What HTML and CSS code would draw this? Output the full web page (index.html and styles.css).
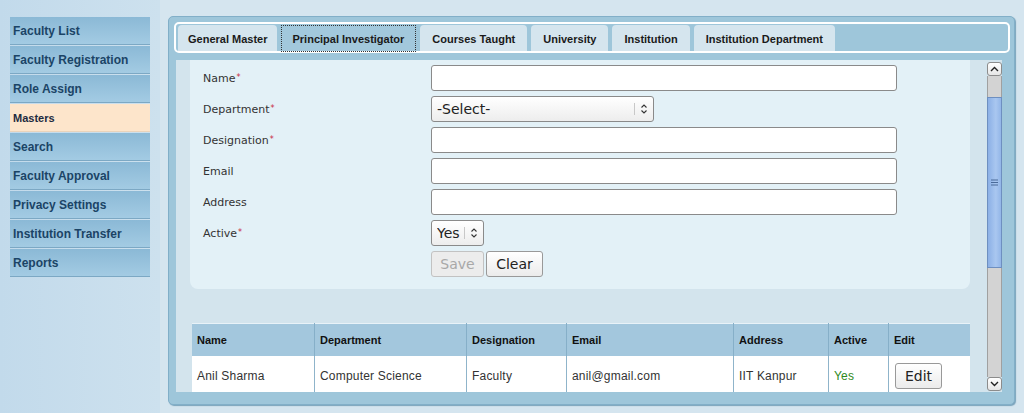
FILE: index.html
```html
<!DOCTYPE html>
<html lang="en">
<head>
    <meta charset="UTF-8">
    <meta name="viewport" content="width=device-width, initial-scale=1.0">
    <title>Masters - Principal Investigator</title>
    <link rel="stylesheet" href="styles.css">
</head>
<body>
    <div class="page">
        <ul class="side-nav">
            <li><a href="#" class="nav-item">Faculty List</a></li>
            <li><a href="#" class="nav-item">Faculty Registration</a></li>
            <li><a href="#" class="nav-item">Role Assign</a></li>
            <li><a href="#" class="nav-item nav-active">Masters</a></li>
            <li><a href="#" class="nav-item">Search</a></li>
            <li><a href="#" class="nav-item">Faculty Approval</a></li>
            <li><a href="#" class="nav-item">Privacy Settings</a></li>
            <li><a href="#" class="nav-item">Institution Transfer</a></li>
            <li><a href="#" class="nav-item">Reports</a></li>
        </ul>

        <div class="main">
            <div class="panel">
                <ul class="tabs">
                    <li class="tab">General Master</li>
                    <li class="tab tab-active"><span class="tab-focus">Principal Investigator</span></li>
                    <li class="tab">Courses Taught</li>
                    <li class="tab">University</li>
                    <li class="tab">Institution</li>
                    <li class="tab">Institution Department</li>
                </ul>

                <div class="tab-body">
                    <div class="scroll-area">
                        <form class="entry-form">
                            <div class="form-row">
                                <label class="form-label">Name<span class="req">*</span></label>
                                <input type="text" class="text-input">
                            </div>
                            <div class="form-row">
                                <label class="form-label">Department<span class="req">*</span></label>
                                <span class="select-wrap select-wide">
                                    <select class="select-box"><option>-Select-</option></select>
                                    <svg class="select-arrows" width="8" height="12" viewBox="0 0 8 12">
                                        <path d="M1.5 4.5 L4 2 L6.5 4.5 M1.5 7.5 L4 10 L6.5 7.5" fill="none" stroke="#333" stroke-width="1.1"/>
                                    </svg>
                                </span>
                            </div>
                            <div class="form-row">
                                <label class="form-label">Designation<span class="req">*</span></label>
                                <input type="text" class="text-input">
                            </div>
                            <div class="form-row">
                                <label class="form-label">Email</label>
                                <input type="text" class="text-input">
                            </div>
                            <div class="form-row">
                                <label class="form-label">Address</label>
                                <input type="text" class="text-input">
                            </div>
                            <div class="form-row">
                                <label class="form-label">Active<span class="req">*</span></label>
                                <span class="select-wrap select-small">
                                    <select class="select-box"><option>Yes</option><option>No</option></select>
                                    <svg class="select-arrows" width="8" height="12" viewBox="0 0 8 12">
                                        <path d="M1.5 4.5 L4 2 L6.5 4.5 M1.5 7.5 L4 10 L6.5 7.5" fill="none" stroke="#333" stroke-width="1.1"/>
                                    </svg>
                                </span>
                            </div>
                            <div class="form-row">
                                <span class="form-label"></span>
                                <div class="button-row">
                                    <button type="button" class="btn btn-save" disabled>Save</button>
                                    <button type="button" class="btn btn-clear">Clear</button>
                                </div>
                            </div>
                        </form>

                        <table class="data-table">
                            <thead>
                                <tr>
                                    <th class="col-name">Name</th>
                                    <th class="col-dept">Department</th>
                                    <th class="col-desig">Designation</th>
                                    <th class="col-email">Email</th>
                                    <th class="col-addr">Address</th>
                                    <th class="col-active">Active</th>
                                    <th class="col-edit">Edit</th>
                                </tr>
                            </thead>
                            <tbody>
                                <tr>
                                    <td>Anil Sharma</td>
                                    <td>Computer Science</td>
                                    <td>Faculty</td>
                                    <td>anil@gmail.com</td>
                                    <td>IIT Kanpur</td>
                                    <td class="status-yes">Yes</td>
                                    <td><button type="button" class="btn btn-edit">Edit</button></td>
                                </tr>
                            </tbody>
                        </table>
                    </div>

                    <!-- fake scrollbar, drawn like the old gtk theme -->
                    <div class="scrollbar">
                        <div class="scroll-btn">
                            <svg width="9" height="6" viewBox="0 0 9 6"><path d="M1 5 L4.5 1.5 L8 5" fill="none" stroke="#222" stroke-width="1.4"/></svg>
                        </div>
                        <div class="scroll-track track-top"></div>
                        <div class="scroll-thumb">
                            <svg width="7" height="7" viewBox="0 0 7 7"><path d="M0 1 H7 M0 3.5 H7 M0 6 H7" stroke="#4a6a99" stroke-width="1"/></svg>
                        </div>
                        <div class="scroll-track track-bottom"></div>
                        <div class="scroll-btn">
                            <svg width="9" height="6" viewBox="0 0 9 6"><path d="M1 1 L4.5 4.5 L8 1" fill="none" stroke="#222" stroke-width="1.4"/></svg>
                        </div>
                    </div>
                </div>
            </div>
        </div>
    </div>
</body>
</html>
```

FILE: styles.css
```css
html, body {
    margin: 0;
    padding: 0;
    height: 413px;
    overflow: hidden;
}
body {
    background-color: #d5e5ef;
    font-family: "Liberation Sans", Arial, sans-serif;
}
.page {
    display: flex;
    height: 413px;
}

/* left menu */
.side-nav {
    list-style: none;
    margin: 0;
    width: 140px;
    padding: 17px 10px 0 10px;
    background: linear-gradient(to right, #c2daeb, #cde1ee);
}
.side-nav li {
    margin-bottom: 1px;
}
.nav-item {
    display: block;
    height: 28px;
    line-height: 28px;
    padding-left: 3px;
    box-sizing: border-box;
    background: linear-gradient(#8bb9d6, #a3cbe3);
    border-bottom: 1px solid #7ca8c4;
    color: #1b4466;
    font-size: 12px;
    font-weight: bold;
    text-decoration: none;
}
.nav-active {
    background: #fde5cb;
    border-bottom: 1px solid #e9d3bb;
    color: #1d2b40;
    font-size: 11px;
}

/* main area */
.main {
    flex: 1;
    padding: 16px 9px 0 8px;
}
.panel {
    border: 1px solid #82afc8;
    border-radius: 5px;
    background-color: #9ec6da;
    padding: 5px 4px 12px 5px;
    box-shadow: 1px 1px 1px #7aa3bb;
}
.tabs {
    list-style: none;
    margin: 0;
    display: flex;
    gap: 4px;
    padding: 1px 2px 0 2px;
    border: 2px solid #ffffff;
    border-radius: 5px;
    height: 26px;
}
.tab {
    height: 26px;
    line-height: 28px;
    padding: 0 12px;
    background-color: #d5e5ee;
    border-radius: 4px 4px 0 0;
    color: #1a1a1a;
    font-size: 11px;
    font-weight: bold;
    white-space: nowrap;
}
.tab:first-child {
    padding: 0 10px;
}
.tab-active {
    background-color: #a2c8dc;
    padding: 0;
}
.tab-focus {
    display: block;
    height: 25px;
    line-height: 26px;
    padding: 0 11px 0 10px;
    border: 1px dotted #333;
}

/* tab content */
.tab-body {
    display: flex;
    height: 332px;
    margin: 7px 8px 0 2px;
    background-color: #d3e4ed;
}
.scroll-area {
    flex: 1;
    overflow: hidden;
    padding: 0 17px 0 14px;
}
.entry-form {
    display: flex;
    flex-direction: column;
    gap: 5px;
    padding: 5px 0 12px 13px;
    background-color: #e3f1f7;
    border-radius: 0 0 8px 8px;
}
.form-row {
    display: flex;
    align-items: center;
    height: 26px;
}
.form-label {
    width: 228px;
    flex-shrink: 0;
    color: #333333;
    font-family: "DejaVu Sans", sans-serif;
    font-size: 11px;
}
.req {
    color: #c8283c;
    font-size: 8px;
    vertical-align: 2px;
    margin-left: 1px;
}
.text-input {
    width: 466px;
    height: 26px;
    box-sizing: border-box;
    border: 1px solid #8a8a8a;
    border-radius: 3px;
    background-color: #ffffff;
    font-family: "DejaVu Sans", sans-serif;
    font-size: 14px;
}
.select-wrap {
    position: relative;
    display: block;
    height: 26px;
}
.select-wide {
    width: 223px;
}
.select-small {
    width: 53px;
}
.select-box {
    appearance: none;
    -webkit-appearance: none;
    width: 100%;
    height: 26px;
    box-sizing: border-box;
    padding: 0 0 0 5px;
    border: 1px solid #8a8a8a;
    border-radius: 3px;
    background: linear-gradient(#ffffff, #ededed);
    color: #222222;
    font-family: "DejaVu Sans", sans-serif;
    font-size: 14px;
}
.select-arrows {
    position: absolute;
    top: 7px;
    right: 6px;
    padding-left: 5px;
    border-left: 1px solid #c8c8c8;
    height: 12px;
}
.button-row {
    display: flex;
    gap: 2px;
}
.btn {
    height: 26px;
    box-sizing: border-box;
    border: 1px solid #999999;
    border-radius: 3px;
    background: linear-gradient(#ffffff, #ebebeb);
    color: #222222;
    font-family: "DejaVu Sans", sans-serif;
    font-size: 14px;
    padding: 0;
}
.btn-save {
    width: 53px;
    color: #a8a8a8;
    border-color: #c2c2c2;
    background: #ececec;
}
.btn-clear {
    width: 57px;
}
.btn-edit {
    width: 47px;
}

/* listing table */
.data-table {
    width: 778px;
    margin: 34px 0 0 2px;
    border-collapse: collapse;
    table-layout: fixed;
    border-top: 1px solid #e8f2f8;
}
.data-table th {
    height: 32px;
    padding: 0 5px;
    background-color: #a3c7dd;
    border-left: 1px solid #86afc8;
    color: #111111;
    font-size: 11px;
    font-weight: bold;
    text-align: left;
}
.data-table td {
    height: 40px;
    padding: 0 5px;
    background-color: #ffffff;
    border-left: 1px solid #8fb4ca;
    color: #333333;
    font-size: 12px;
    letter-spacing: 0.2px;
    vertical-align: top;
    line-height: 40px;
}
.data-table td:last-child {
    padding: 7px 0 0 6px;
    line-height: normal;
}
.data-table th:first-child,
.data-table td:first-child {
    border-left: none;
}
.col-name { width: 112px; }
.col-dept { width: 141px; }
.col-desig { width: 89px; }
.col-email { width: 156px; }
.col-addr { width: 84px; }
.col-active { width: 49px; }
.col-edit { width: 71px; }
.status-yes {
    color: #2f8a1c !important;
}

/* scrollbar */
.scrollbar {
    width: 15px;
    margin: 2px 0 1px 0;
    display: flex;
    flex-direction: column;
}
.scroll-btn {
    height: 14px;
    box-sizing: border-box;
    border: 1px solid #8c8c8c;
    border-radius: 3px;
    background: linear-gradient(#ffffff, #e6e6e6);
    display: flex;
    align-items: center;
    justify-content: center;
}
.scroll-track {
    background-color: #d3d3d3;
    border-left: 1px solid #a0a0a0;
    border-right: 1px solid #a0a0a0;
}
.track-top {
    height: 21px;
}
.track-bottom {
    flex: 1;
}
.scroll-thumb {
    height: 171px;
    box-sizing: border-box;
    border: 1px solid #6e8fc0;
    background: linear-gradient(to right, #8cb0e6, #a9c7f0 60%, #93b6e8);
    display: flex;
    align-items: center;
    justify-content: center;
}
```
